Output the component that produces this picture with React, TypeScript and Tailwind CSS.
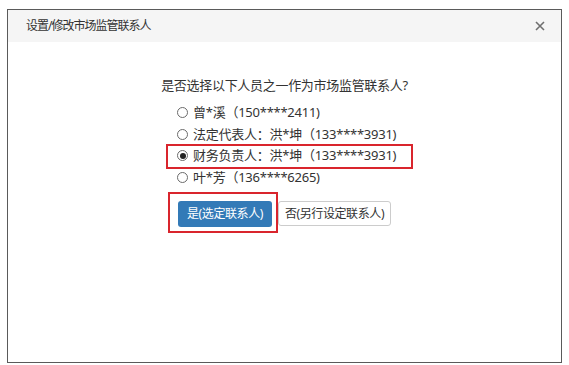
const options = [
    { label: "曾*溪（150****2411)", checked: false, marked: false },
    { label: "法定代表人：洪*坤（133****3931)", checked: false, marked: false },
    { label: "财务负责人：洪*坤（133****3931)", checked: true, marked: true },
    { label: "叶*芳（136****6265)", checked: false, marked: false },
];

const Radio = ({ checked }: { checked: boolean }) => (
    <span className="flex h-[11px] w-[11px] shrink-0 items-center justify-center rounded-full border border-[#6b6b6b] bg-white">
        {checked && <span className="h-[6px] w-[6px] rounded-full bg-[#222]" />}
    </span>
);

export default function App() {
    return (
        <div
            className="h-[365px] w-[569px] bg-white pl-[7px] pt-[9px] text-[#333]"
            style={{ fontFamily: '"Noto Sans", "Noto Sans CJK SC", sans-serif' }}
        >
            <div className="flex h-[354px] w-[555px] flex-col border border-[#5a5a5a] bg-white">
                {/* header */}
                <div className="flex h-[32px] items-center justify-between bg-[#f5f5f5] pl-[18px] pr-[15px]">
                    <span className="text-[12px] tracking-[-1px]">设置/修改市场监管联系人</span>
                    <svg width="10" height="10" viewBox="0 0 10 10" className="mr-[1px]">
                        <path d="M1 1 L9 9 M9 1 L1 9" stroke="#6f6f6f" strokeWidth="1.6" />
                    </svg>
                </div>

                {/* body */}
                <div className="flex flex-col pt-[34px]">
                    <p className="text-center text-[13px] leading-[18px] tracking-[-0.3px]">
                        是否选择以下人员之一作为市场监管联系人?
                    </p>
                    <div className="mt-[8px] flex flex-col pl-[169px]">
                        {options.map((o, i) => (
                            <div key={i} className="relative flex h-[21.5px] items-center gap-[5px] text-[13px]">
                                <Radio checked={o.checked} />
                                <span className="tracking-[-0.25px]">{o.label}</span>
                                {o.marked && (
                                    <span className="absolute left-[-11px] top-[-1px] h-[25px] w-[247px] border-2 border-[#d9252d]" />
                                )}
                            </div>
                        ))}
                    </div>
                    <div className="mt-[12px] flex items-center gap-[6px] pl-[170px]">
                        <div className="relative">
                            <button className="h-[26px] w-[94px] rounded-[3px] bg-[#337ab7] text-[12px] tracking-[-0.4px] text-white">
                                是(选定联系人)
                            </button>
                            <span className="absolute left-[-10px] top-[-8px] h-[41px] w-[110px] border-2 border-[#d9252d]" />
                        </div>
                        <button className="h-[25px] w-[113px] rounded-[3px] border border-[#ccc] bg-white text-[12px] tracking-[-0.4px] text-[#333]">
                            否(另行设定联系人)
                        </button>
                    </div>
                </div>
            </div>
        </div>
    );
}
